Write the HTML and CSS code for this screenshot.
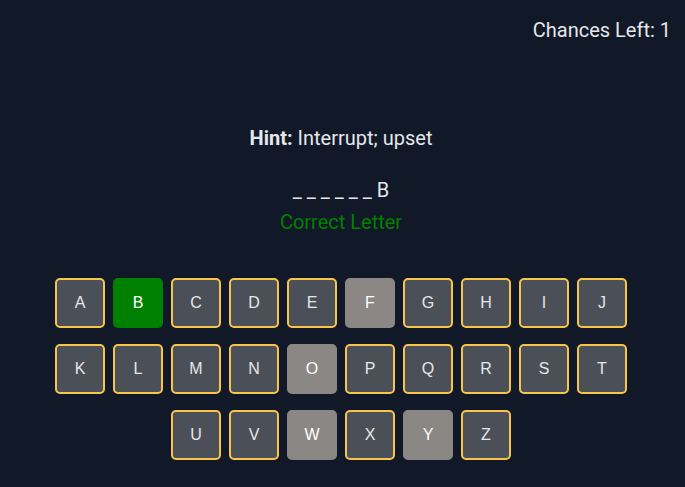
FILE: index.html
```html
<!DOCTYPE html>
<html>
<head>
<meta charset="utf-8">
<link rel="stylesheet" href="styles.css">
</head>
<body>
<div class="page">
  <div class="chances">Chances Left: 1</div>
  <div class="hint"><b>Hint:</b> Interrupt; upset</div>
  <div class="word">_ _ _ _ _ _ B</div>
  <div class="status">Correct Letter</div>
  <div class="keys">
    <div class="row">
      <button class="key">A</button><button class="key correct">B</button><button class="key">C</button><button class="key">D</button><button class="key">E</button><button class="key used">F</button><button class="key">G</button><button class="key">H</button><button class="key">I</button><button class="key">J</button>
    </div>
    <div class="row">
      <button class="key">K</button><button class="key">L</button><button class="key">M</button><button class="key">N</button><button class="key used">O</button><button class="key">P</button><button class="key">Q</button><button class="key">R</button><button class="key">S</button><button class="key">T</button>
    </div>
    <div class="row">
      <button class="key">U</button><button class="key">V</button><button class="key used">W</button><button class="key">X</button><button class="key used">Y</button><button class="key">Z</button>
    </div>
  </div>
</div>
</body>
</html>
```
FILE: styles.css
```css
html, body {
  margin: 0;
  padding: 0;
  background: #111827;
  height: 100%;
}
.page {
  font-family: Roboto, "Liberation Sans", sans-serif;
  color: #e5e7eb;
  display: flex;
  flex-direction: column;
  align-items: center;
  padding-top: 16px;
  padding-right: 3px;
}
.chances {
  align-self: flex-end;
  margin-right: 11px;
  font-size: 20px;
  line-height: 28px;
}
.hint {
  margin-top: 80px;
  font-size: 20px;
  line-height: 28px;
}
.hint b {
  font-weight: 700;
}
.word {
  margin-top: 24px;
  font-size: 20px;
  line-height: 28px;
}
.status {
  margin-top: 4px;
  font-size: 20px;
  line-height: 28px;
  color: #008000;
}
.keys {
  margin-top: 42px;
  display: flex;
  flex-direction: column;
  gap: 16px;
}
.row {
  display: flex;
  justify-content: center;
  gap: 8px;
}
.key {
  width: 50px;
  height: 50px;
  box-sizing: border-box;
  border: 2px solid #f9c548;
  border-radius: 5px;
  background: #4b4f58;
  color: #e5e7eb;
  font-family: "Liberation Sans", Arial, sans-serif;
  font-size: 16px;
  padding: 0;
}
.key.correct {
  background: #008000;
  border-color: #008000;
  color: #ffffff;
}
.key.used {
  background: #8b8785;
  border-color: #8b8785;
  color: #ffffff;
}
```
